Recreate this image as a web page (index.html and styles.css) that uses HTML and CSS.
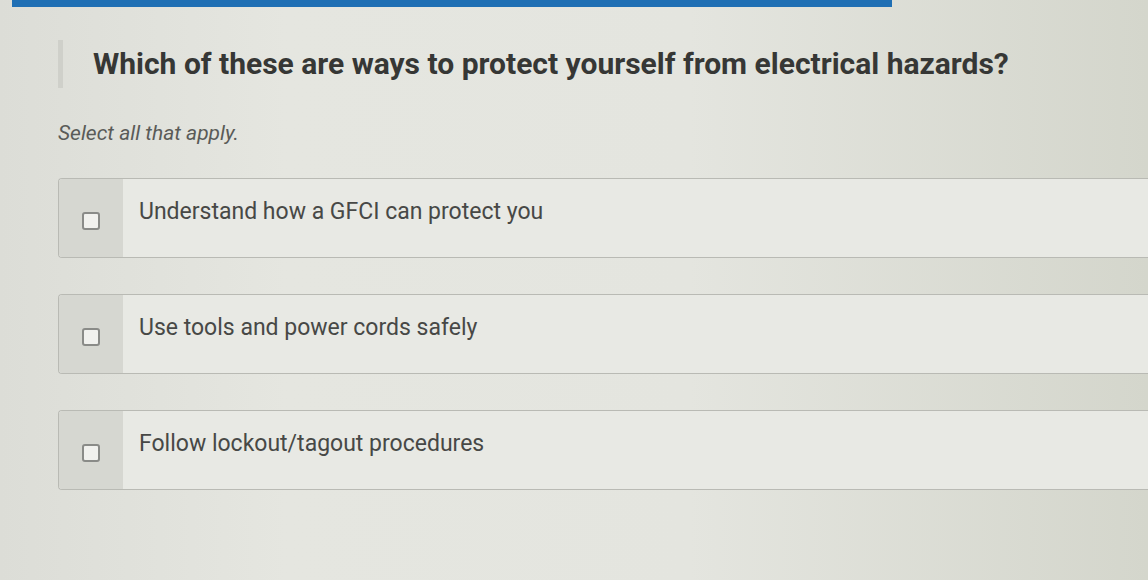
FILE: index.html
```html
<!DOCTYPE html>
<html>

<head>
  <title>Electrical Safety Quiz</title>
  <meta charset="utf-8">
  <link rel="stylesheet" href="styles.css">
</head>

<body>
  <div class="progress-bar"></div>

  <div class="quiz">
    <h2 class="question">Which of these are ways to protect yourself from electrical hazards?</h2>
    <p class="instruction">Select all that apply.</p>

    <!-- Answer choices -->
    <ul class="choices">
      <li class="choice">
        <label class="choice-check"><span class="checkbox"></span></label>
        <div class="choice-text">Understand how a GFCI can protect you</div>
      </li>
      <li class="choice">
        <label class="choice-check"><span class="checkbox"></span></label>
        <div class="choice-text">Use tools and power cords safely</div>
      </li>
      <li class="choice">
        <label class="choice-check"><span class="checkbox"></span></label>
        <div class="choice-text">Follow lockout/tagout procedures</div>
      </li>
    </ul>
  </div>
</body>

</html>
```

FILE: styles.css
```css
:root {
  --bg-color: #e3e4de;
  --surface-color: #e8e9e4;
  --check-cell-color: #d6d7d1;
  --border-color: #b9bab4;
  --text-color: #474846;
  --heading-color: #363735;
  --secondary-text-color: #5a5b58;
  --accent-color: #1f6fb4;
}

html,
body {
  height: 100%;
}

body {
  font-family: Roboto, "Liberation Sans", Arial, sans-serif;
  background: linear-gradient(90deg, #dcddd7 0%, #e5e6e0 25%, #e4e5df 60%, #d4d6cc 100%);
  color: var(--text-color);
  margin: 0;
  overflow: hidden;
}

.progress-bar {
  height: 7px;
  width: 880px;
  margin-left: 12px;
  background-color: var(--accent-color);
}

.quiz {
  padding-left: 58px;
}

/* --- Question --- */
.question {
  display: flex;
  align-items: center;
  height: 46px;
  margin: 33px 0 0 0;
  padding: 0 0 2px 30px;
  border-left: 5px solid #cfd0ca;
  font-size: 30px;
  font-weight: 700;
  color: var(--heading-color);
}

.instruction {
  margin: 33px 0 0 0;
  font-size: 21px;
  font-style: italic;
  color: var(--secondary-text-color);
}

/* --- Choices --- */
.choices {
  list-style-type: none;
  padding: 0;
  margin: 33px 0 0 0;
}

.choice {
  display: flex;
  width: 1120px;
  height: 78px;
  margin-bottom: 36px;
  background-color: var(--surface-color);
  border: 1.5px solid var(--border-color);
  border-right: none;
  border-radius: 4px 0 0 4px;
}

.choice-check {
  flex: 0 0 64px;
  display: flex;
  justify-content: center;
  padding-top: 33px;
  background-color: var(--check-cell-color);
  border-radius: 3px 0 0 3px;
}

.checkbox {
  width: 18px;
  height: 18px;
  box-sizing: border-box;
  border: 2.5px solid #8a8b88;
  border-radius: 3px;
  background-color: #f1f1ee;
}

.choice-text {
  padding: 19px 0 0 16px;
  font-size: 23px;
  color: var(--text-color);
}
```
